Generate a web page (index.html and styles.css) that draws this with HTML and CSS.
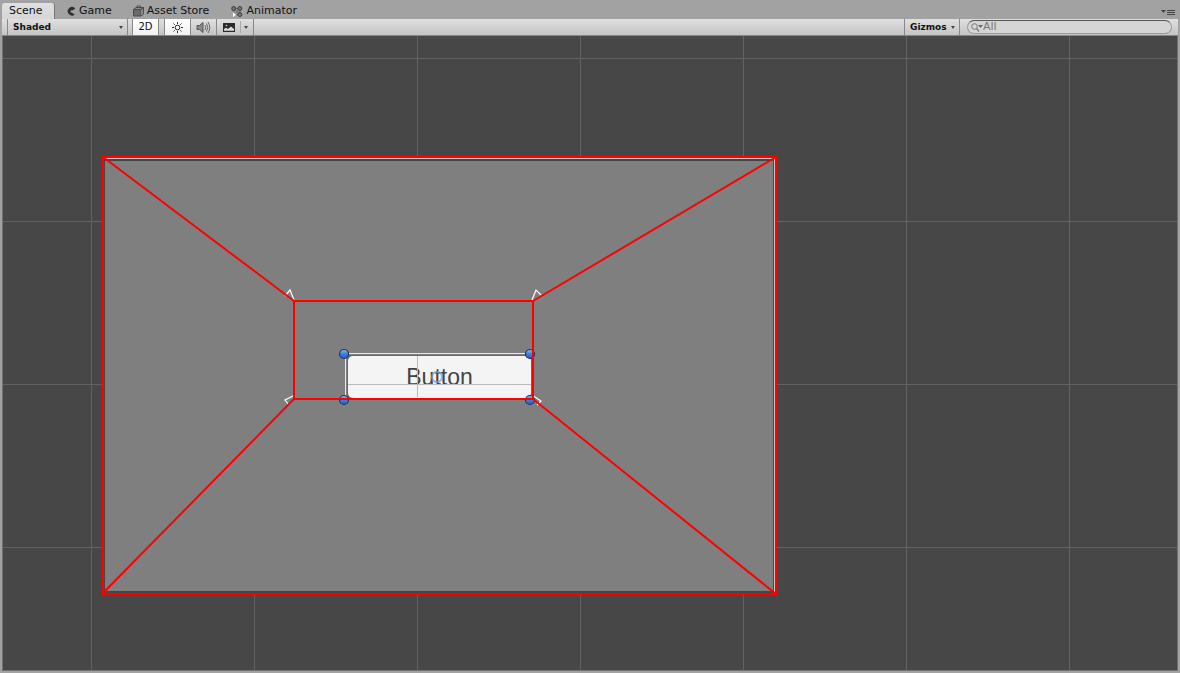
FILE: index.html
```
<!DOCTYPE html>
<html lang="en">
<head>
<meta charset="utf-8">
<title>Scene</title>
<link rel="stylesheet" href="styles.css">
</head>
<body>
<div class="window">
  <nav class="tabs">
    <button class="tab tab-active">Scene</button>
    <button class="tab tab-game">
      <svg width="10" height="11" viewBox="0 0 10 11"><path d="M8.500 1.800A4.300 4.300 0 1 0 8.800 8.600L5.500 6.500H4.500V4.500H6L9 3Z" fill="#2e2e2e"/></svg>
      Game
    </button>
    <button class="tab tab-store">
      <svg width="11" height="12" viewBox="0 0 11 12"><path d="M.5 4.500H8V11H.5Z" fill="#6a6a6a" stroke="#4c4c4c"/><path d="M8 4.500L10.500 2.500V9L8 11M.5 4.500L3 2.500H10.500L8 4.500Z" fill="#8c8c8c" stroke="#4c4c4c"/><path d="M4 3V1H7.500V3" fill="none" stroke="#4c4c4c"/></svg>
      Asset Store
    </button>
    <button class="tab tab-animator">
      <svg width="12" height="13" viewBox="0 0 12 13"><path d="M3 3.500H9V9.500H3ZM3 3.500L9 9.500M9 3.500L3 9.500" stroke="#666" fill="none"/><g fill="#777" stroke="#3c3c3c"><circle cx="2.700" cy="3.500" r="2"/><circle cx="8.800" cy="3.500" r="2"/><circle cx="8.800" cy="9.500" r="2"/></g><path d="M1.500 6.500L5.500 9.800L1.500 13Z" fill="#fff" stroke="#777" stroke-width=".5"/></svg>
      Animator
    </button>
    <button class="pane-menu" aria-label="Pane options">
      <svg width="14" height="7" viewBox="0 0 14 7"><path d="M0 1H5L2.500 4Z" fill="#444"/><path d="M6 1.500H14M6 3.500H14M6 5.500H14" stroke="#444" shape-rendering="crispEdges"/></svg>
    </button>
  </nav>

  <div class="toolbar">
    <button class="tool shading">Shaded <i class="arrow"></i></button>
    <button class="tool tool-on mode">2D</button>
    <div class="group">
      <button class="tool tool-on" aria-label="Scene lighting">
        <svg width="13" height="13" viewBox="0 0 13 13"><circle cx="6.500" cy="6.500" r="2.300" fill="#fff" stroke="#222"/><path d="M6.500 1V3M6.500 10V12M1 6.500H3M10 6.500H12M2.500 2.500L3.800 3.800M9.200 9.200L10.500 10.500M10.500 2.500L9.200 3.800M3.800 9.200L2.500 10.500" stroke="#333"/></svg>
      </button>
      <button class="tool" aria-label="Scene audio">
        <svg width="15" height="13" viewBox="0 0 15 13"><path d="M1 4.500H3.500L7 1.500V11.500L3.500 8.500H1Z" fill="#888" stroke="#555"/><path d="M9 4Q10.500 6.500 9 9M10.500 2.500Q13 6.500 10.500 10.500M12 1Q15.500 6.500 12 12" fill="none" stroke="#666"/></svg>
      </button>
      <button class="tool effects" aria-label="Scene effects">
        <svg width="12" height="9" viewBox="0 0 12 9"><path d="M0 0H12V9H0Z" fill="#2c2c2c"/><path d="M1 7.800V6L3 4.800L5 6L8 3.500L11 6V7.800Z" fill="#ddd"/><circle cx="3.500" cy="2.500" r=".8" fill="#ddd"/></svg>
        <span class="divider"></span>
        <i class="arrow"></i>
      </button>
    </div>
    <button class="tool gizmos">Gizmos <i class="arrow"></i></button>
    <label class="search">
      <svg width="12" height="9" viewBox="0 0 12 9"><circle cx="3.500" cy="3.500" r="2.800" fill="none" stroke="#777"/><path d="M5.500 5.500L8 8.500" stroke="#777" stroke-width="1.300"/><path d="M7 2H12L9.500 5Z" fill="#666"/></svg>
      <input type="text" value="All" aria-label="Search scene">
    </label>
  </div>

  <main class="scene">
    <svg class="layer" width="1176" height="634" viewBox="2 36 1176 634" shape-rendering="crispEdges">
      <path d="M103 157H776V594H103Z" fill="#464646"/>
      <path d="M105 161H773V591H105Z" fill="#7f7f7f"/>
      <path d="M104 158.500H774.500V593" fill="none" stroke="#c8c8c8"/>
      <path d="M345.500 398V353.500H531" fill="none" stroke="#e8e8e8"/>
      <path d="M347 355H532V399H347Z" fill="#686868"/>
    </svg>
    <button class="ui-button">Button</button>
    <svg class="layer overlay" width="1176" height="634" viewBox="2 36 1176 634">
      <defs>
        <linearGradient id="knob" x1="0" y1="0" x2="0" y2="1"><stop offset="0" stop-color="#8dbcf5"/><stop offset=".5" stop-color="#3b80e0"/><stop offset="1" stop-color="#0862ee"/></linearGradient>
      </defs>
      <path d="M417.500 356V397M348 384.500H531" stroke="#b9bab9"/>
      <circle cx="437" cy="377" r="5" fill="none" stroke="#6da0df" stroke-width="2" opacity=".75"/>
      <g fill="url(#knob)" stroke="#26354a" stroke-width="1.200">
        <circle cx="344" cy="354" r="4.500"/><circle cx="530" cy="354" r="4.500"/>
        <circle cx="344" cy="400" r="4.500"/><circle cx="530" cy="400" r="4.500"/>
      </g>
      <g fill="none" stroke="#fff" stroke-width="1.200">
        <path d="M294 300L290 290L285 296"/><path d="M532 300L536 290L541 295"/>
        <path d="M295 395L285 400L289 405"/><path d="M532 395L541 401L537 405"/>
      </g>
      <g fill="none" stroke="#f00" stroke-width="2">
        <path d="M103 157H776V594H103Z"/>
        <path d="M294 301H533V399H294Z"/>
        <path d="M103 157L294 301M776 157L533 301M776 594L533 399M103 593L294 399"/>
      </g>
    </svg>
  </main>
</div>
</body>
</html>
```
FILE: styles.css
```
* { box-sizing: border-box; }

body {
  margin: 0;
  font-family: "DejaVu Sans", Verdana, sans-serif;
  font-size: 11px;
  color: #111;
}

button {
  margin: 0;
  padding: 0;
  border: 0;
  background: none;
  font: inherit;
  color: inherit;
}

svg { display: block; flex: none; }

.window {
  display: flex;
  flex-direction: column;
  height: 100vh;
  padding: 3px 2px 2px;
  background: #a2a2a2;
}

.tabs {
  display: flex;
  height: 16px;
}

.tab {
  display: flex;
  align-items: center;
  gap: 3px;
  line-height: 16px;
}

.tab-active {
  width: 53px;
  padding-left: 7px;
  border-right: 1px solid #777;
  border-radius: 3px 3px 0 0;
  background: linear-gradient(#e0e0e0, #d6d6d6);
}

.tab-game { margin-left: 11px; }
.tab-store { margin-left: 21px; }
.tab-animator { margin-left: 22px; }

.pane-menu {
  align-self: flex-end;
  margin: 0 3px 3px auto;
}

.toolbar {
  display: flex;
  height: 17px;
  padding-left: 5px;
  border-bottom: 1px solid #888;
  background: linear-gradient(#e0e0e0, #c4c4c4);
  font-size: 10px;
  line-height: 16px;
}

.tool {
  display: flex;
  align-items: center;
  justify-content: center;
  width: 26px;
  border-right: 1px solid #888;
}

.tool-on { background: linear-gradient(#fff, #f1f1f1); }

.arrow {
  border: 2px solid transparent;
  border-top: 3px solid #444;
  border-bottom: 0;
}

.shading {
  justify-content: space-between;
  width: 121px;
  padding: 0 4px 0 5px;
  border-left: 1px solid #888;
  font-weight: bold;
  font-size: 9px;
}

.mode {
  margin-left: 4px;
  border-left: 1px solid #888;
  width: 27px;
}

.group {
  display: flex;
  margin-left: 5px;
  border-left: 1px solid #888;
}

.effects {
  width: 37px;
  gap: 3px;
}

.divider {
  width: 1px;
  height: 12px;
  margin-left: 2px;
  background: #aaa;
}

.gizmos {
  justify-content: space-between;
  width: 56px;
  margin-left: auto;
  padding: 0 4px 0 5px;
  border-left: 1px solid #888;
  font-weight: bold;
  font-size: 9px;
}

.search {
  display: flex;
  align-items: center;
  width: 205px;
  height: 14px;
  margin: 1px 6px 0 7px;
  padding-left: 3px;
  border: 1px solid #999;
  border-top-color: #555;
  border-radius: 7px;
  background: #d5d5d5;
}

.search input {
  flex: 1;
  min-width: 0;
  height: 12px;
  padding: 0;
  border: 0;
  outline: 0;
  background: none;
  color: #777;
  font: 11px/12px "DejaVu Sans", sans-serif;
}

.scene {
  position: relative;
  flex: 1;
  overflow: hidden;
  border: solid #727272;
  border-width: 0 1px 1px;
  background-color: #474747;
  background-image:
    linear-gradient(90deg, #626262 1px, transparent 1px),
    linear-gradient(#626262 1px, transparent 1px);
  background-size: 163px 163px;
  background-position: 89px 22px;
  background-origin: border-box;
}

.layer {
  position: absolute;
  top: 0;
  left: -1px;
}

.overlay { pointer-events: none; }

.ui-button {
  position: absolute;
  top: 320px;
  left: 345px;
  width: 183px;
  height: 42px;
  border-radius: 5px;
  background: #f4f4f4;
  color: #444;
  font: 23px/42px "Liberation Sans", Arial, sans-serif;
}
```
